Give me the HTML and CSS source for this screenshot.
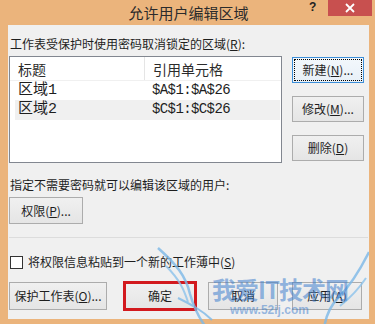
FILE: index.html
```html
<!DOCTYPE html>
<html lang="zh-CN">
<head>
    <meta charset="UTF-8">
    <meta name="viewport" content="width=device-width, initial-scale=1.0">
    <title>允许用户编辑区域</title>
    <link rel="stylesheet" href="styles.css">
</head>
<body>
    <div class="window">
        <div class="titlebar">
            <span class="title">允许用户编辑区域</span>
            <span class="help">?</span>
            <span class="close">
                <svg width="10" height="10" viewBox="0 0 10 10"><path d="M1 1L9 9M9 1L1 9" stroke="#fff" stroke-width="1.8"/></svg>
            </span>
        </div>

        <div class="dialog">
            <div class="label first">工作表受保护时使用密码取消锁定的区域(<u>R</u>):</div>

            <div class="ranges">
                <div class="list">
                    <div class="head">
                        <span class="h1">标题</span>
                        <span class="h2">引用单元格</span>
                    </div>
                    <div class="row">
                        <span class="c1">区域1</span>
                        <span class="c2">$A$1:$A$26</span>
                    </div>
                    <div class="row sel">
                        <span class="c1">区域2</span>
                        <span class="c2">$C$1:$C$26</span>
                    </div>
                </div>
                <div class="side">
                    <button class="btn focus">新建(<u>N</u>)...</button>
                    <button class="btn">修改(<u>M</u>)...</button>
                    <button class="btn">删除(<u>D</u>)</button>
                </div>
            </div>

            <div class="label second">指定不需要密码就可以编辑该区域的用户:</div>
            <button class="btn perm">权限(<u>P</u>)...</button>

            <div class="sep"></div>

            <div class="check">
                <span class="box"></span>
                <span>将权限信息粘贴到一个新的工作薄中(<u>S</u>)</span>
            </div>

            <div class="actions">
                <button class="btn protect">保护工作表(<u>O</u>)...</button>
                <button class="btn ok">确定</button>
                <button class="btn cancel">取消</button>
                <button class="btn apply">应用(<u>A</u>)</button>
            </div>

            <!-- 水印 -->
            <div class="watermark">
                <svg class="wings" width="361" height="90" viewBox="0 0 361 90">
                    <path d="M150 2 C 168 18, 178 30, 182 48 C 186 62, 192 74, 200 84" fill="none" stroke="#7db9e8" stroke-width="2.5"/>
                    <path d="M158 20 C 172 34, 176 44, 180 56" fill="none" stroke="#8cc3ec" stroke-width="2"/>
                    <path d="M170 52 C 182 58, 194 64, 204 74" fill="none" stroke="#7db9e8" stroke-width="2"/>
                    <path d="M361 6 C 352 24, 342 40, 330 52 C 322 60, 318 70, 316 82" fill="none" stroke="#7db9e8" stroke-width="2.5"/>
                    <path d="M358 32 C 350 44, 342 52, 332 60" fill="none" stroke="#8cc3ec" stroke-width="2"/>
                </svg>
                <span class="wm-title">我爱IT技术网</span>
                <span class="wm-url">www.52ij.com</span>
            </div>
        </div>
    </div>
</body>
</html>
```

FILE: styles.css
```css
body {
    margin: 0;
    padding: 0;
    background-color: #ebb47c;
    font-family: "Noto Sans CJK SC", "Noto Sans", sans-serif;
    color: #1e1e1e;
}

.window {
    width: 375px;
    height: 324px;
    display: flex;
    flex-direction: column;
}

.titlebar {
    position: relative;
    height: 25px;
    text-align: center;
}

.title {
    display: inline-block;
    font-size: 15px;
    line-height: 24px;
    color: #2b2b2b;
    padding-left: 2px;
}

.help {
    position: absolute;
    left: 309px;
    top: 0;
    font-family: "Liberation Sans", sans-serif;
    font-weight: bold;
    font-size: 12px;
    line-height: 14px;
    color: #222;
}

.close {
    position: absolute;
    left: 328px;
    top: 0;
    width: 44px;
    height: 16px;
    background-color: #c8504f;
    display: flex;
    align-items: center;
    justify-content: center;
}

.dialog {
    position: relative;
    flex: 1;
    margin: 0 6px 5px 8px;
    padding: 0 0 0 1px;
    background-color: #f0f0f0;
    display: flex;
    flex-direction: column;
    align-items: flex-start;
    font-size: 12px;
}

.label {
    line-height: 16px;
    padding-left: 1px;
    white-space: nowrap;
}

.label.first {
    margin-top: 11px;
}

.label.second {
    margin-top: 14px;
}

.ranges {
    display: flex;
    margin-top: 4px;
}

.list {
    width: 271px;
    height: 105px;
    border: 1px solid #828790;
    background-color: #fff;
}

.head {
    display: flex;
    height: 24px;
    border-bottom: 1px solid #f0f0f0;
    box-sizing: border-box;
    font-size: 14px;
    line-height: 24px;
    color: #2b2b2b;
}

.h1 {
    width: 126px;
    padding-left: 8px;
    border-right: 1px solid #e5e5e5;
}

.h2 {
    padding-left: 8px;
}

.row {
    display: flex;
    height: 19px;
    margin: 0 1px 0 5px;
    line-height: 19px;
    font-size: 15px;
}

.row:first-of-type {
    margin-top: 0;
}

.head + .row {
    height: 19px;
}

.row.sel {
    height: 20px;
    background-color: #f0f0f0;
}

.c1 {
    width: 126px;
    padding-left: 3px;
    font-family: "Liberation Mono", "Noto Sans CJK SC", monospace;
}

.c2 {
    padding-left: 8px;
    font-family: "Liberation Mono", monospace;
    font-size: 14px;
    letter-spacing: -0.6px;
}

.side {
    display: flex;
    flex-direction: column;
    gap: 13px;
    margin: 1px 0 0 10px;
}

.btn {
    font-family: "Noto Sans CJK SC", "Noto Sans", sans-serif;
    font-size: 12px;
    color: #1e1e1e;
    background: linear-gradient(#f0f0f0, #e5e5e5);
    border: 1px solid #acacac;
    padding: 0;
    margin: 0;
    height: 26px;
    line-height: 24px;
    text-align: center;
}

.side .btn {
    width: 72px;
}

.btn.focus {
    border-color: #3c8ed8;
    background: linear-gradient(#f3f8fc, #e8f0f8);
    outline: 1px dotted #000;
    outline-offset: -3px;
}

.btn.perm {
    width: 74px;
    height: 27px;
    margin-top: 4px;
}

.sep {
    align-self: stretch;
    height: 1px;
    margin: 13px 1px 0 0;
    background-color: #dcdcdc;
}

.check {
    display: flex;
    align-items: center;
    gap: 5px;
    margin-top: 16px;
    line-height: 16px;
    padding-left: 1px;
}

.box {
    width: 11px;
    height: 11px;
    border: 1px solid #333;
    background-color: #fff;
}

.actions {
    display: flex;
    margin-top: 12px;
}

.actions .btn {
    height: 28px;
    line-height: 26px;
    width: 70px;
}

.btn.protect {
    width: 98px;
}

.btn.ok {
    width: 72px;
    margin-left: 17px;
    outline: 3px solid #d2191e;
    outline-offset: -2px;
}

.btn.cancel {
    margin-left: 12px;
}

.btn.apply {
    margin-left: 14px;
}

.watermark {
    position: absolute;
    left: 0;
    top: 221px;
    width: 361px;
    height: 73px;
    pointer-events: none;
}

.wings {
    position: absolute;
    left: 0;
    top: 0;
    opacity: 0.8;
}

.wm-title {
    position: absolute;
    left: 204px;
    top: 30px;
    font-size: 24px;
    font-weight: bold;
    line-height: 26px;
    color: rgba(60, 125, 205, 0.55);
    white-space: nowrap;
    letter-spacing: -1px;
}

.wm-url {
    position: absolute;
    left: 222px;
    top: 58px;
    font-family: "Liberation Sans", sans-serif;
    font-size: 12px;
    font-weight: bold;
    line-height: 12px;
    color: rgba(60, 125, 205, 0.5);
}
```
